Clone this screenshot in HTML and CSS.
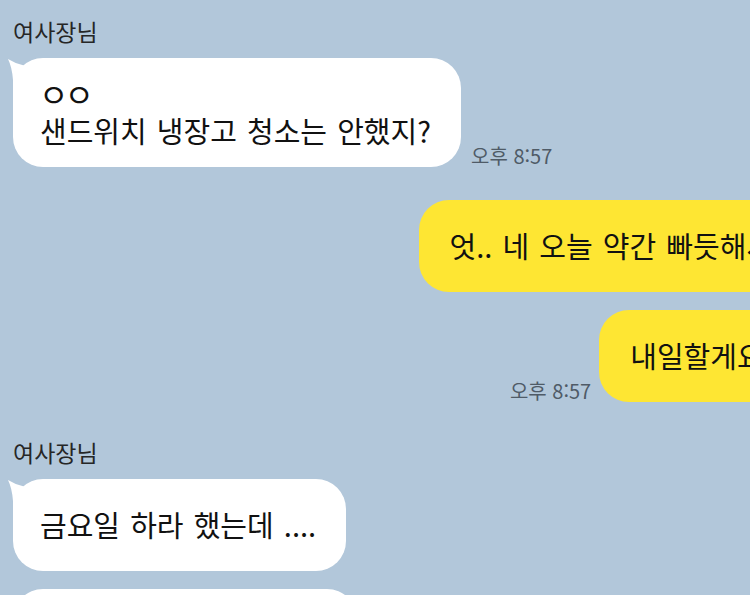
FILE: index.html
```html
<!DOCTYPE html>
<html lang="ko">
<head>
  <meta charset="UTF-8" />
  <meta name="viewport" content="width=device-width, initial-scale=1.0" />
  <title>채팅</title>
  <link rel="stylesheet" href="styles.css">
</head>
<body>
  <div class="chat">

    <div class="group in">
      <div class="name">여사장님</div>
      <div class="row">
        <div class="bubble has-tail">
          <svg class="tail" width="17" height="34" viewBox="-6 0 17 34">
            <path d="M-5 1 Q3 6 11 7.5 L11 34 L0 34 L0 22 Q-1 9 -5 1 Z" fill="#fff" />
          </svg>
          <span class="jamo">ㅇㅇ</span>
          <span>샌드위치 냉장고 청소는 안했지?</span>
        </div>
        <span class="time">오후 8:57</span>
      </div>
    </div>

    <div class="group out">
      <div class="row">
        <div class="bubble">엇.. 네 오늘 약간 빠듯해서</div>
      </div>
      <div class="row">
        <span class="time">오후 8:57</span>
        <div class="bubble">내일할게요!</div>
      </div>
    </div>

    <div class="group in">
      <div class="name">여사장님</div>
      <div class="row">
        <div class="bubble has-tail">
          <svg class="tail" width="17" height="34" viewBox="-6 0 17 34">
            <path d="M-5 1 Q3 6 11 7.5 L11 34 L0 34 L0 22 Q-1 9 -5 1 Z" fill="#fff" />
          </svg>
          <span>금요일 하라 했는데 ....</span>
        </div>
      </div>
      <div class="row">
        <div class="bubble">다음주에는 꼭 해주세요</div>
      </div>
    </div>

  </div>
</body>
</html>
```

FILE: styles.css
```css
html, body {
  margin: 0;
  height: 100%;
  overflow: hidden;
}

body {
  background-color: #b2c7da;
  font-family: "Noto Sans CJK KR", "Noto Sans", sans-serif;
  color: #111;
}

.chat {
  width: 792px;
  padding: 15px 13px;
  display: flex;
  flex-direction: column;
}

.group {
  display: flex;
  flex-direction: column;
  gap: 18px;
}

.group.in {
  align-items: flex-start;
}

.group.out {
  align-items: flex-end;
  margin-top: 33px;
}

.group.out + .group.in {
  margin-top: 34px;
}

.name {
  font-size: 23px;
  line-height: 32px;
  color: #262626;
  margin-bottom: -7px;
}

.row {
  display: flex;
  align-items: flex-end;
  gap: 10px;
}

.out .row {
  gap: 8px;
}

.bubble {
  position: relative;
  display: flex;
  flex-direction: column;
  justify-content: center;
  box-sizing: border-box;
  min-height: 92px;
  padding: 17px 30px 18px 27px;
  border-radius: 30px;
  background: #fff;
  font-size: 29px;
  line-height: 37px;
  word-spacing: 2px;
  white-space: nowrap;
}

.out .bubble {
  background: #fee633;
  padding-left: 31px;
  padding-right: 32px;
}

.jamo {
  font-size: 32px;
  letter-spacing: -4px;
  margin-left: -1px;
}

.tail {
  position: absolute;
  left: -6px;
  top: 0;
}

.time {
  font-size: 20px;
  line-height: 22px;
  color: #4f5b67;
}
```
